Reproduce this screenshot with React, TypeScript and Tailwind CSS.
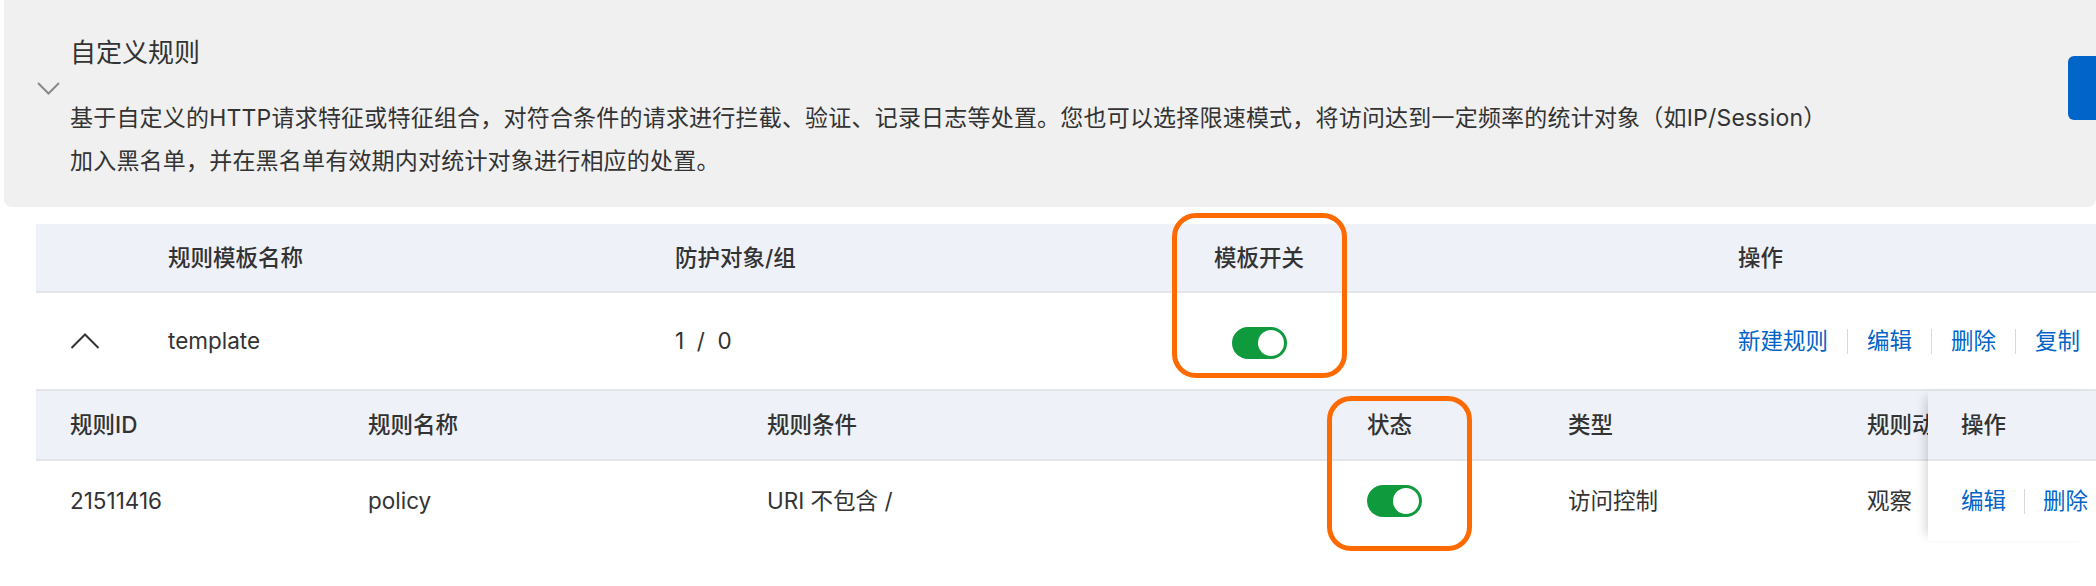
import React from "react";

function Switch() {
  return (
    <div className="w-[55px] h-[32px] rounded-full bg-[#0e9a3d] flex items-center justify-end pr-[3px]">
      <div className="w-[26px] h-[26px] rounded-full bg-white" />
    </div>
  );
}

function Links({ items, gap }: { items: string[]; gap: string }) {
  return (
    <div className="flex items-center text-[#0064c8]">
      {items.map((t, i) => (
        <React.Fragment key={t}>
          {i > 0 && <span className={`w-px h-[25px] bg-[#d9d9d9] ${gap}`} />}
          <span>{t}</span>
        </React.Fragment>
      ))}
    </div>
  );
}

export default function App() {
  return (
    <div className="relative w-[2096px] h-[586px] bg-white overflow-hidden text-[#333] font-['Inter','Noto_Sans_CJK_SC',sans-serif]">
      {/* intro panel */}
      <div className="ml-[4px] h-[207px] bg-[#f0f0f0] rounded-b-lg flex">
        <div className="flex-1">
          <div className="pl-[66px] pt-[38px] text-[26px] leading-[30px]">自定义规则</div>
          <div className="ml-[33px] mt-[14px]">
            <svg width="23" height="13" viewBox="0 0 23 13" fill="none">
              <path d="M1 1l10.5 10.5L22 1" stroke="#8a8a8a" strokeWidth="2" />
            </svg>
          </div>
          <div className="pl-[66px] mt-[2px] text-[23px] leading-[43px] tracking-[0.2px]">
            基于自定义的HTTP请求特征或特征组合，对符合条件的请求进行拦截、验证、记录日志等处置。您也可以选择限速模式，将访问达到一定频率的统计对象（如IP/Session）
            <br />
            加入黑名单，并在黑名单有效期内对统计对象进行相应的处置。
          </div>
        </div>
        <div className="w-[28px] h-[64px] mt-[56px] bg-[#0064c8] rounded-l-[6px]" />
      </div>

      {/* template table */}
      <div className="ml-[36px] mt-[17px] text-[22.5px]">
        <div className="h-[69px] bg-[#eef1f7] border-b-2 border-[#e3e5e9] flex items-center font-medium">
          <div className="w-[132px]" />
          <div className="w-[507px]">规则模板名称</div>
          <div className="w-[325px]">防护对象/组</div>
          <div className="w-[518px] text-center">模板开关</div>
          <div className="flex-1 pl-[220px]">操作</div>
        </div>
        <div className="h-[98px] border-b-2 border-[#e3e5e9] flex items-center">
          <div className="w-[132px] pl-[34px]">
            <svg width="30" height="16" viewBox="0 0 30 16" fill="none">
              <path d="M1.5 15L15 1.5 28.5 15" stroke="#333" strokeWidth="2" />
            </svg>
          </div>
          <div className="w-[507px]">template</div>
          <div className="w-[325px]">1&nbsp;&nbsp;/&nbsp;&nbsp;0</div>
          <div className="w-[518px] flex justify-center pt-[4px]">
            <Switch />
          </div>
          <div className="flex-1 pl-[220px]">
            <Links items={["新建规则", "编辑", "删除", "复制"]} gap="mx-[19px]" />
          </div>
        </div>

        {/* rules sub table */}
        <div className="flex">
          <div className="flex-1 overflow-hidden">
            <div className="h-[70px] bg-[#eef1f7] border-b-2 border-[#e3e5e9] flex items-center font-medium whitespace-nowrap">
              <div className="w-[332px] shrink-0 pl-[34px]">规则ID</div>
              <div className="w-[399px] shrink-0">规则名称</div>
              <div className="w-[600px] shrink-0">规则条件</div>
              <div className="w-[201px] shrink-0">状态</div>
              <div className="w-[299px] shrink-0">类型</div>
              <div className="w-[120px] shrink-0">规则动作</div>
            </div>
            <div className="h-[80px] flex items-center whitespace-nowrap">
              <div className="w-[332px] shrink-0 pl-[34px]">21511416</div>
              <div className="w-[399px] shrink-0">policy</div>
              <div className="w-[600px] shrink-0">URI 不包含 /</div>
              <div className="w-[201px] shrink-0">
                <Switch />
              </div>
              <div className="w-[299px] shrink-0">访问控制</div>
              <div className="w-[120px] shrink-0">观察</div>
            </div>
          </div>
          <div className="w-[168px] shrink-0 relative z-10 bg-white shadow-[-8px_0_10px_-6px_rgba(0,0,0,0.18)]">
            <div className="h-[70px] bg-[#eef1f7] border-b-2 border-[#e3e5e9] flex items-center pl-[33px] font-medium">
              操作
            </div>
            <div className="h-[80px] flex items-center pl-[33px]">
              <Links items={["编辑", "删除"]} gap="mx-[18px]" />
            </div>
          </div>
        </div>
      </div>

      {/* highlight annotations */}
      <div className="absolute left-[1172px] top-[213px] w-[175px] h-[165px] border-[5px] border-[#ff6a00] rounded-[24px]" />
      <div className="absolute left-[1327px] top-[396px] w-[145px] h-[155px] border-[5px] border-[#ff6a00] rounded-[24px]" />
    </div>
  );
}
